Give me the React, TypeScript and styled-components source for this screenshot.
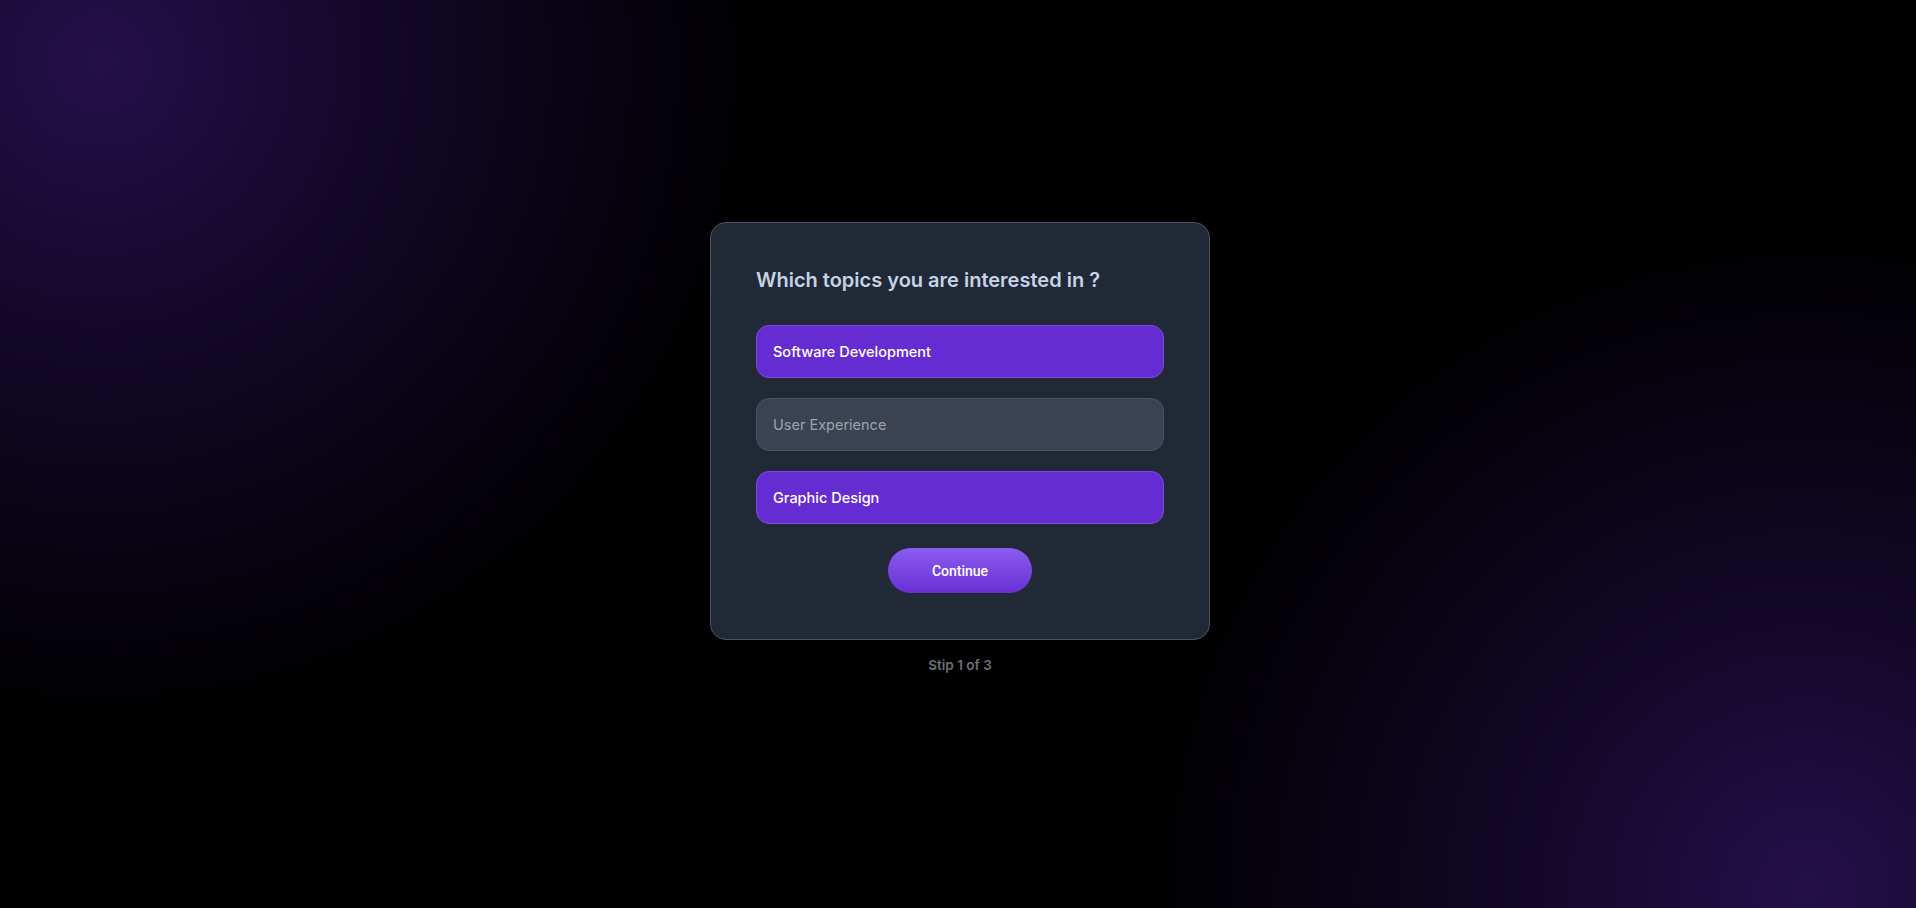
import React, { useState } from "react";
import styled, { createGlobalStyle } from "styled-components";

const GlobalStyle = createGlobalStyle`
  html, body {
    margin: 0;
    padding: 0;
    background: #000;
  }
  * { box-sizing: border-box; }
`;

const Page = styled.div`
  min-height: 100vh;
  width: 100%;
  display: flex;
  flex-direction: column;
  align-items: center;
  justify-content: center;
  padding: 0 0 12px 4px;
  background:
    radial-gradient(circle 660px at 100px 62px, rgba(35, 16, 74, 1) 0%, rgba(26, 11, 56, 0.75) 40%, rgba(0, 0, 0, 0) 100%),
    radial-gradient(circle 660px at 1806px 890px, rgba(35, 16, 74, 1) 0%, rgba(26, 11, 56, 0.75) 40%, rgba(0, 0, 0, 0) 100%),
    #000;
  font-family: Inter, "Noto Sans", sans-serif;
`;

const Card = styled.div`
  width: 500px;
  background: #222936;
  border: 1px solid #4a5160;
  border-radius: 16px;
  padding: 44px 45px 46px;
  display: flex;
  flex-direction: column;
`;

const Title = styled.h2`
  margin: 0 0 32px;
  font-family: Inter, "Noto Sans", sans-serif;
  font-size: 20px;
  font-weight: 600;
  line-height: 26px;
  color: #c5d3e8;
`;

const Options = styled.div`
  display: flex;
  flex-direction: column;
  gap: 20px;
`;

const Option = styled.button<{ $selected: boolean }>`
  height: 53px;
  width: 100%;
  text-align: left;
  padding: 0 16px;
  border-radius: 13px;
  border: 1px solid ${(p) => (p.$selected ? "#7c4be0" : "#4a5161")};
  background: ${(p) => (p.$selected ? "#652dd1" : "#3b4251")};
  color: ${(p) => (p.$selected ? "#ffffff" : "#9ca3af")};
  font-family: Inter, "Noto Sans", sans-serif;
  font-size: 14.5px;
  font-weight: ${(p) => (p.$selected ? 500 : 400)};
  cursor: pointer;
`;

const ButtonRow = styled.div`
  display: flex;
  justify-content: center;
  margin-top: 24px;
`;

const ContinueButton = styled.button`
  width: 144px;
  height: 45px;
  border: none;
  border-radius: 999px;
  background: linear-gradient(180deg, #8a5cf0 0%, #6a2fd4 100%);
  color: #fff;
  font-family: Roboto, "Liberation Sans", sans-serif;
  font-size: 14px;
  font-weight: 500;
  cursor: pointer;
`;

const Step = styled.div`
  margin-top: 16px;
  font-family: Inter, "Noto Sans", sans-serif;
  font-size: 13.5px;
  font-weight: 600;
  color: #6b6f78;
  line-height: 18px;
`;

const topics = ["Software Development", "User Experience", "Graphic Design"];

export default function App() {
  const [selected, setSelected] = useState<string[]>([
    "Software Development",
    "Graphic Design",
  ]);
  const toggle = (t: string) =>
    setSelected((s) => (s.includes(t) ? s.filter((x) => x !== t) : [...s, t]));

  return (
    <>
      <GlobalStyle />
      <Page>
        <Card>
          <Title>Which topics you are interested in ?</Title>
          <Options>
            {topics.map((t) => (
              <Option key={t} $selected={selected.includes(t)} onClick={() => toggle(t)}>
                {t}
              </Option>
            ))}
          </Options>
          <ButtonRow>
            <ContinueButton>Continue</ContinueButton>
          </ButtonRow>
        </Card>
        <Step>Stip 1 of 3</Step>
      </Page>
    </>
  );
}
